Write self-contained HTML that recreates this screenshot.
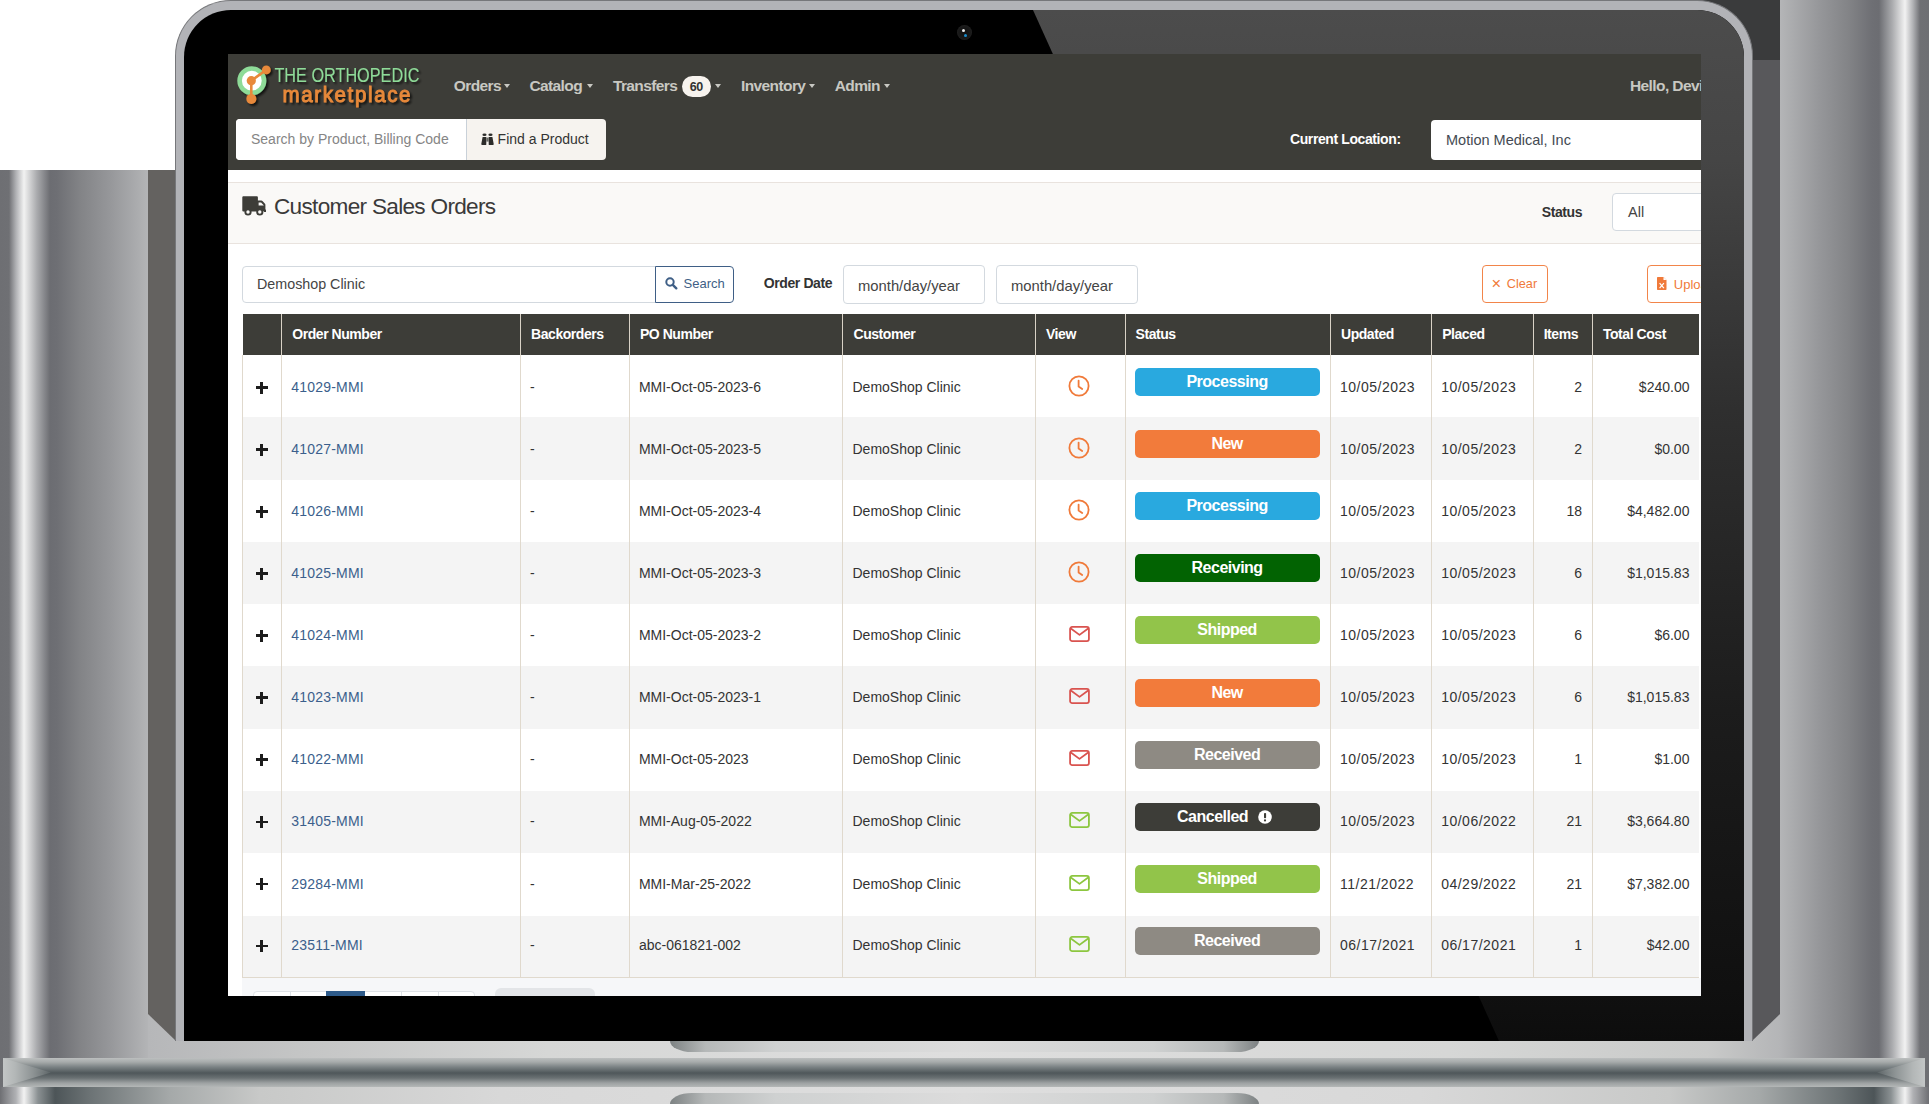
<!DOCTYPE html>
<html><head><meta charset="utf-8">
<style>
*{box-sizing:border-box}
html,body{margin:0;padding:0}
body{width:1929px;height:1104px;position:relative;overflow:hidden;background:#fff;font-family:"Liberation Sans",sans-serif}
.a{position:absolute}
#lstrip{left:0;top:170px;width:149px;height:934px;background:linear-gradient(90deg,#6e6f73 0px,#6f7074 9px,#b0b1b4 16px,#f2f2f2 24px,#a9aaad 37px,#6c6d72 50px,#6e6f74 57px,#838487 81px,#96979a 110px,#b4b5b7 149px)}
#rstrip{left:1780px;top:0;width:149px;height:1104px;background:linear-gradient(270deg,#6e6f73 0px,#6f7074 9px,#b0b1b4 16px,#f2f2f2 24px,#a9aaad 37px,#6c6d72 50px,#6e6f74 57px,#838487 81px,#96979a 110px,#b4b5b7 149px)}
#ltrap{left:148px;top:170px;width:28px;height:871px;background:#646260;clip-path:polygon(0 0,100% 0,100% 100%,0 844px)}
#rtrapTop{left:1690px;top:0;width:90px;height:60px;background:#3a3b3c}
#rtrap{left:1752px;top:60px;width:28px;height:981px;background:#58585b;clip-path:polygon(0 0,100% 0,100% 954px,0 100%)}
#bottom{left:148px;top:1005px;width:1632px;height:99px;background:linear-gradient(90deg,#b6b7b9 0px,#c4c5c5 150px,#d6d7d6 400px,#dedede 800px,#d6d7d6 1300px,#c9cac9 1560px,#b4b5b7 1632px)}
#bot2{left:0;top:1087px;width:1929px;height:17px;background:linear-gradient(90deg,#6e6f73 0px,#b0b1b4 16px,#f2f2f2 24px,#8a9092 38px,#4d5558 55px,#6c7375 90px,#a5a9a9 170px,#c8c9c8 260px,#d8d8d8 500px,#dedede 960px,#d8d8d8 1420px,#c8c9c8 1669px,#a5a9a9 1759px,#6c7375 1839px,#4d5558 1874px,#8a9092 1891px,#f2f2f2 1905px,#b0b1b4 1913px,#6e6f73 1929px)}
#bar{left:3px;top:1058px;width:1922px;height:29px;background:linear-gradient(180deg,#bcbfbf 0px,#a7abab 4px,#7b8284 9px,#4f575a 15px,#6a7173 20px,#9da1a2 25px,#b4b7b7 29px)}
.hinge{left:670px;width:589px;height:11px;background:linear-gradient(90deg,#7d8283 0%,#b5b8b8 6%,#cfd1d1 18%,#dcdcdc 50%,#cfd1d1 82%,#b5b8b8 94%,#7d8283 100%)}
#h1{top:1041px;border-radius:0 0 22px 22px/0 0 11px 11px}
#h2{top:1093px;border-radius:22px 22px 0 0/11px 11px 0 0}
#body{left:175px;top:0;width:1578px;height:1041px;background:#b2b3b7;border-radius:56px 56px 0 0;border:1px solid #76777a;border-bottom:0}
#inner{left:184px;top:10px;width:1560px;height:1031px;background:#000;border-radius:47px 47px 0 0;overflow:hidden}
#glare{left:0;top:0;width:1560px;height:1031px;background:linear-gradient(180deg,#4c4c4c 0px,#454545 150px,#2f2f2f 400px,#1c1c1c 700px,#0f0f0f 1000px,#0d0d0d 1031px);clip-path:polygon(849px 0,1560px 0,1560px 1031px,1315px 1031px)}
#cam{left:957px;top:25px;width:15px;height:15px;border-radius:50%;background:radial-gradient(circle at 50% 50%,#111 0,#1a1a1a 60%,#2a2a2a 85%,#111 100%)}
#screen{left:228px;top:54px;width:1473px;height:942px;background:#fff;overflow:hidden}
</style></head>
<body>
<div class="a" id="lstrip"></div>
<div class="a" id="rstrip"></div>
<div class="a" id="bottom"></div>
<div class="a" id="rtrapTop"></div>
<div class="a" id="ltrap"></div>
<div class="a" id="rtrap"></div>
<div class="a" id="bot2"></div>
<div class="a hinge" id="h1"></div>
<div class="a hinge" id="h2"></div>
<div class="a" id="bar"></div>
<div class="a" style="left:3px;top:1058px;width:48px;height:29px;background:linear-gradient(90deg,#c3c6c6 0px,#b3b7b7 12px,#8d9394 30px,rgba(100,108,110,0.6) 48px);clip-path:polygon(0 0,100% 50%,0 100%)"></div>
<div class="a" style="left:1877px;top:1058px;width:48px;height:29px;background:linear-gradient(270deg,#c3c6c6 0px,#b3b7b7 12px,#8d9394 30px,rgba(100,108,110,0.6) 48px);clip-path:polygon(100% 0,0 50%,100% 100%)"></div>
<div class="a" id="body"></div>
<div class="a" id="inner"><div class="a" id="glare"></div></div>
<div class="a" id="cam"><div class="a" style="left:5px;top:3.5px;width:3px;height:3px;border-radius:50%;background:#eee"></div><div class="a" style="left:6.5px;top:8.5px;width:3px;height:3px;border-radius:50%;background:#1a8ccc"></div></div>
<div class="a" id="screen">
<style>
#screen .t{position:absolute;white-space:nowrap;line-height:1}
#nav{left:0;top:0;width:1473px;height:116px;background:#3d3d38}
.mi{font-size:15.5px;font-weight:bold;color:#c8c8c2;letter-spacing:-0.6px}
.caret{position:absolute;width:0;height:0;border-left:3px solid transparent;border-right:3px solid transparent;border-top:4px solid #c8c8c2}
#tbl{position:absolute;left:14px;top:260px;width:1457px;border-collapse:collapse;table-layout:fixed;font-size:14px;color:#333}
#tbl th{background:#3d3d38;color:#fff;font-weight:bold;text-align:left;height:41px;padding:0 0 2px 10px;letter-spacing:-0.45px;border-left:1px solid #d9d2c6;white-space:nowrap;overflow:hidden}
#tbl td{height:62.3px;padding:1.4px 0 0 9px;border-left:1px solid #e0d9cd;white-space:nowrap;overflow:hidden}
#tbl tr:last-child td{border-bottom:1px solid #e0d9cd}
#tbl td.c0{padding:0;position:relative}
.plus{position:absolute;left:12.5px;top:26.5px;width:12px;height:12px}
.plus:before{content:"";position:absolute;left:0;top:4.8px;width:12px;height:2.5px;background:#1c1c1c}
.plus:after{content:"";position:absolute;left:4.8px;top:0;width:2.5px;height:12px;background:#1c1c1c}
#tbl td.lnk{color:#3b5f8c;letter-spacing:0.2px}
#tbl td.ic{padding:0 2px 0 0;text-align:center;line-height:0}
#tbl td.ic svg{display:inline-block}
#tbl td.st{padding:0 0 0 9px}
.badge{height:28px;width:185px;border-radius:5px;color:#fff;font-weight:bold;font-size:16px;letter-spacing:-0.5px;text-align:center;line-height:28px;margin-top:-8px;position:relative}
.excl{position:absolute;left:123.5px;top:7px;line-height:0}
#tbl td.dt{letter-spacing:0.5px}
#tbl td.rt{text-align:right;padding:1.4px 10px 0 0}
.inp{position:absolute;background:#fff;border:1px solid #d3d9df;border-radius:4px}
</style>
<div class="a" id="nav"></div>
<!-- logo -->
<svg class="a" style="left:4px;top:6px" width="200" height="48" viewBox="0 0 200 48">
<defs><filter id="sh" x="-20%" y="-20%" width="140%" height="160%"><feGaussianBlur in="SourceAlpha" stdDeviation="1.2"/><feOffset dx="1.5" dy="2" result="o"/><feComponentTransfer><feFuncA type="linear" slope="0.7"/></feComponentTransfer><feMerge><feMergeNode/><feMergeNode in="SourceGraphic"/></feMerge></filter></defs>
<g filter="url(#sh)">
<circle cx="19.8" cy="20.7" r="12.2" fill="#fff" stroke="#8edb98" stroke-width="4.6"/>
<path d="M34.3 9.9L19.3 20.7L19.3 38.9" fill="none" stroke="#e8893a" stroke-width="2.6"/>
<circle cx="34.3" cy="9.9" r="4.4" fill="#e8893a"/>
<circle cx="19.3" cy="20.7" r="4.6" fill="#e8893a"/>
<circle cx="19.3" cy="38.9" r="5" fill="#e8893a"/>
<text x="42.4" y="21.6" font-family="Liberation Sans" font-size="20.5" fill="#8edb98" textLength="145" lengthAdjust="spacingAndGlyphs">THE ORTHOPEDIC</text>
<text x="50.5" y="41.8" transform="translate(0,41.8) scale(1,1.12) translate(0,-41.8)" font-family="Liberation Sans" font-size="20.5" fill="#e8893a" stroke="#e8893a" stroke-width="0.8" textLength="128" lengthAdjust="spacing">marketplace</text>
</g>
</svg>
<div class="t mi" style="left:225.8px;top:24px">Orders</div><div class="caret" style="left:276px;top:30px"></div>
<div class="t mi" style="left:301.4px;top:24px">Catalog</div><div class="caret" style="left:359.2px;top:30px"></div>
<div class="t mi" style="left:384.9px;top:24px">Transfers</div>
<div class="a" style="left:454px;top:22px;width:28.7px;height:21px;border-radius:10.5px;background:#f7f3ee;color:#333;font-size:12.5px;line-height:23px;text-align:center;font-weight:bold;letter-spacing:-0.3px">60</div>
<div class="caret" style="left:487px;top:30px"></div>
<div class="t mi" style="left:513px;top:24px">Inventory</div><div class="caret" style="left:580.5px;top:30px"></div>
<div class="t mi" style="left:606.7px;top:24px">Admin</div><div class="caret" style="left:655.6px;top:30px"></div>
<div class="t mi" style="left:1402px;top:24.2px">Hello, Devin</div>
<!-- search group -->
<div class="a" style="left:8px;top:65.3px;width:369.5px;height:40.5px;border-radius:4px;background:#f6f3ef;overflow:hidden">
<div class="a" style="left:0;top:0;width:230.5px;height:40.5px;background:#fff;border-right:1px solid #c9d1d9"></div>
</div>
<div class="t" style="left:23px;top:78.2px;font-size:14px;color:#858585">Search by Product, Billing Code</div>
<svg class="a" style="left:253px;top:79px" width="13" height="12" viewBox="0 0 13 12"><ellipse cx="3.5" cy="1.8" rx="2.1" ry="1.2" fill="#2c2c2a"/><ellipse cx="9.5" cy="1.8" rx="2.1" ry="1.2" fill="#2c2c2a"/><path d="M1.6 4H5.3V11.4C5.3 11.7 5 12 4.6 12H1C0.5 12 0.2 11.6 0.3 11.1Z" fill="#2c2c2a"/><path d="M7.7 4H11.4L12.7 11.1C12.8 11.6 12.5 12 12 12H8.4C8 12 7.7 11.7 7.7 11.4Z" fill="#2c2c2a"/><rect x="5.3" y="4.6" width="2.4" height="4" fill="#6a6a66"/></svg>
<div class="t" style="left:269.6px;top:78.2px;font-size:14px;color:#333">Find a Product</div>
<div class="t" style="left:1062px;top:78.4px;font-size:14px;font-weight:bold;color:#fff;letter-spacing:-0.4px">Current Location:</div>
<div class="a" style="left:1203px;top:66px;width:300px;height:40px;border-radius:4px;background:#fff"></div>
<div class="t" style="left:1218px;top:79px;font-size:14.5px;color:#444a52">Motion Medical, Inc</div>
<!-- header -->
<div class="a" style="left:0;top:128px;width:1473px;height:62px;background:#faf9f7;border-top:1px solid #e9e3de;border-bottom:1px solid #e9e3de"></div>
<svg class="a" style="left:13.7px;top:142px" width="24" height="20" viewBox="0 0 24 20"><path d="M1.6 0.3H14.6C15.4 0.3 15.9 0.8 15.9 1.6V4.6H19.2C19.8 4.6 20.3 4.8 20.7 5.2L23 7.8C23.3 8.1 23.4 8.5 23.4 8.9V15.2H15.9V15.6H1.6C0.8 15.6 0.3 15.1 0.3 14.3V1.6C0.3 0.8 0.8 0.3 1.6 0.3Z" fill="#3d3d38"/><path d="M16.6 6.4H19.1L21.7 9.3V9.6H16.6Z" fill="#faf9f7"/><circle cx="6" cy="16" r="3.6" fill="#3d3d38"/><circle cx="6" cy="16" r="1.7" fill="#faf9f7"/><circle cx="17.8" cy="16" r="3.6" fill="#3d3d38"/><circle cx="17.8" cy="16" r="1.7" fill="#faf9f7"/><rect x="22" y="13.6" width="2" height="2.4" fill="#3d3d38"/></svg>
<div class="t" style="left:46px;top:141.6px;font-size:22.6px;color:#3a3a3a;letter-spacing:-0.7px">Customer Sales Orders</div>
<div class="t" style="left:1313.7px;top:151.2px;font-size:14px;font-weight:bold;color:#333;letter-spacing:-0.4px">Status</div>
<div class="inp" style="left:1384.4px;top:138.8px;width:200px;height:38px"></div>
<div class="t" style="left:1400px;top:150.5px;font-size:14.5px;color:#444">All</div>
<!-- filter row -->
<div class="inp" style="left:14px;top:211.6px;width:414px;height:37.8px;border-radius:4px 0 0 4px"></div>
<div class="t" style="left:29px;top:223px;font-size:14.3px;color:#444">Demoshop Clinic</div>
<div class="a" style="left:427px;top:211.6px;width:79.4px;height:37.8px;border:1.3px solid #3f5f86;border-radius:0 4px 4px 0;background:#fff"></div>
<svg class="a" style="left:437px;top:222.5px" width="13" height="13" viewBox="0 0 13 13"><circle cx="5" cy="5" r="3.7" fill="none" stroke="#3f5f86" stroke-width="2"/><path d="M7.8 7.8L11.3 11.3" stroke="#3f5f86" stroke-width="2.4" stroke-linecap="round"/></svg>
<div class="t" style="left:455.6px;top:222.8px;font-size:13px;color:#3f5f86">Search</div>
<div class="t" style="left:535.8px;top:222px;font-size:14px;font-weight:bold;color:#333;letter-spacing:-0.4px">Order Date</div>
<div class="inp" style="left:614.8px;top:211px;width:142.2px;height:38.6px"></div>
<div class="t" style="left:630px;top:224.8px;font-size:14.8px;color:#444">month/day/year</div>
<div class="inp" style="left:767.6px;top:211px;width:142px;height:38.6px"></div>
<div class="t" style="left:783px;top:224.8px;font-size:14.8px;color:#444">month/day/year</div>
<div class="a" style="left:1254px;top:211.2px;width:65.5px;height:37.8px;border:1.5px solid #f2854a;border-radius:4px"></div>
<div class="t" style="left:1263.5px;top:221px;font-size:16.5px;color:#f07a3a">×</div>
<div class="t" style="left:1278.8px;top:223.8px;font-size:12.7px;color:#f07a3a">Clear</div>
<div class="a" style="left:1419px;top:211.2px;width:120px;height:37.8px;border:1.5px solid #f2854a;border-radius:4px"></div>
<svg class="a" style="left:1429px;top:223px" width="10" height="13" viewBox="0 0 10 13"><path d="M0 1C0 0.4 0.4 0 1 0H6.5L9.5 3V12C9.5 12.6 9.1 13 8.5 13H1C0.4 13 0 12.6 0 12Z" fill="#f07a3a"/><path d="M2.6 6.2L6.9 11.2M6.9 6.2L2.6 11.2" stroke="#fff" stroke-width="1.2"/><path d="M6.5 0V3H9.5" fill="#fff"/></svg>
<div class="t" style="left:1445.8px;top:223.8px;font-size:13px;color:#f07a3a">Upload</div>
<!-- table -->
<table id="tbl">
<colgroup><col style="width:39.3px"><col style="width:238.8px"><col style="width:108.8px"><col style="width:213.6px"><col style="width:192.5px"><col style="width:89.6px"><col style="width:205.4px"><col style="width:101.2px"><col style="width:101.5px"><col style="width:59.3px"><col style="width:107px"></colgroup>
<thead><tr><th style="border-left:0"></th><th>Order Number</th><th>Backorders</th><th>PO Number</th><th>Customer</th><th>View</th><th>Status</th><th>Updated</th><th>Placed</th><th>Items</th><th>Total Cost</th></tr></thead>
<tbody>
<tr style="background:#fff"><td class="c0"><span class="plus" style="top:26.50px"></span></td><td class="lnk" style="padding-top:2.40px">41029-MMI</td><td style="padding-top:2.40px">-</td><td style="padding-top:2.40px">MMI-Oct-05-2023-6</td><td style="padding-top:2.40px">DemoShop Clinic</td><td class="ic"><span style="position:relative;display:inline-block;top:-0.00px"><svg width="22" height="22" viewBox="0 0 22 22"><circle cx="11" cy="11" r="9.6" fill="none" stroke="#f07a3a" stroke-width="1.8"/><path d="M10.6 5.6V11.4L14.2 14" fill="none" stroke="#f07a3a" stroke-width="1.8" stroke-linecap="round" stroke-linejoin="round"/></svg></span></td><td class="st"><div class="badge" style="background:#29a9df;top:-0.00px">Processing</div></td><td class="dt" style="padding-top:2.40px">10/05/2023</td><td class="dt" style="padding-top:2.40px">10/05/2023</td><td class="rt" style="padding-top:2.40px">2</td><td class="rt" style="padding-top:2.40px">$240.00</td></tr>
<tr style="background:#f4f4f4"><td class="c0"><span class="plus" style="top:26.23px"></span></td><td class="lnk" style="padding-top:1.84px">41027-MMI</td><td style="padding-top:1.84px">-</td><td style="padding-top:1.84px">MMI-Oct-05-2023-5</td><td style="padding-top:1.84px">DemoShop Clinic</td><td class="ic"><span style="position:relative;display:inline-block;top:-0.25px"><svg width="22" height="22" viewBox="0 0 22 22"><circle cx="11" cy="11" r="9.6" fill="none" stroke="#f07a3a" stroke-width="1.8"/><path d="M10.6 5.6V11.4L14.2 14" fill="none" stroke="#f07a3a" stroke-width="1.8" stroke-linecap="round" stroke-linejoin="round"/></svg></span></td><td class="st"><div class="badge" style="background:#f27b3b;top:-0.22px">New</div></td><td class="dt" style="padding-top:1.84px">10/05/2023</td><td class="dt" style="padding-top:1.84px">10/05/2023</td><td class="rt" style="padding-top:1.84px">2</td><td class="rt" style="padding-top:1.84px">$0.00</td></tr>
<tr style="background:#fff"><td class="c0"><span class="plus" style="top:25.97px"></span></td><td class="lnk" style="padding-top:1.29px">41026-MMI</td><td style="padding-top:1.29px">-</td><td style="padding-top:1.29px">MMI-Oct-05-2023-4</td><td style="padding-top:1.29px">DemoShop Clinic</td><td class="ic"><span style="position:relative;display:inline-block;top:-0.50px"><svg width="22" height="22" viewBox="0 0 22 22"><circle cx="11" cy="11" r="9.6" fill="none" stroke="#f07a3a" stroke-width="1.8"/><path d="M10.6 5.6V11.4L14.2 14" fill="none" stroke="#f07a3a" stroke-width="1.8" stroke-linecap="round" stroke-linejoin="round"/></svg></span></td><td class="st"><div class="badge" style="background:#29a9df;top:-0.44px">Processing</div></td><td class="dt" style="padding-top:1.29px">10/05/2023</td><td class="dt" style="padding-top:1.29px">10/05/2023</td><td class="rt" style="padding-top:1.29px">18</td><td class="rt" style="padding-top:1.29px">$4,482.00</td></tr>
<tr style="background:#f4f4f4"><td class="c0"><span class="plus" style="top:25.70px"></span></td><td class="lnk" style="padding-top:0.73px">41025-MMI</td><td style="padding-top:0.73px">-</td><td style="padding-top:0.73px">MMI-Oct-05-2023-3</td><td style="padding-top:0.73px">DemoShop Clinic</td><td class="ic"><span style="position:relative;display:inline-block;top:-0.75px"><svg width="22" height="22" viewBox="0 0 22 22"><circle cx="11" cy="11" r="9.6" fill="none" stroke="#f07a3a" stroke-width="1.8"/><path d="M10.6 5.6V11.4L14.2 14" fill="none" stroke="#f07a3a" stroke-width="1.8" stroke-linecap="round" stroke-linejoin="round"/></svg></span></td><td class="st"><div class="badge" style="background:#026302;top:-0.66px">Receiving</div></td><td class="dt" style="padding-top:0.73px">10/05/2023</td><td class="dt" style="padding-top:0.73px">10/05/2023</td><td class="rt" style="padding-top:0.73px">6</td><td class="rt" style="padding-top:0.73px">$1,015.83</td></tr>
<tr style="background:#fff"><td class="c0"><span class="plus" style="top:25.43px"></span></td><td class="lnk" style="padding-top:0.18px">41024-MMI</td><td style="padding-top:0.18px">-</td><td style="padding-top:0.18px">MMI-Oct-05-2023-2</td><td style="padding-top:0.18px">DemoShop Clinic</td><td class="ic"><span style="position:relative;display:inline-block;top:-1.00px"><svg width="21" height="16" viewBox="0 0 22 17"><rect x="1" y="1" width="20" height="15" rx="2.2" fill="none" stroke="#d9534f" stroke-width="1.9"/><path d="M1.8 2.6L11 9.4L20.2 2.6" fill="none" stroke="#d9534f" stroke-width="1.9" stroke-linejoin="round"/></svg></span></td><td class="st"><div class="badge" style="background:#92c44a;top:-0.88px">Shipped</div></td><td class="dt" style="padding-top:0.18px">10/05/2023</td><td class="dt" style="padding-top:0.18px">10/05/2023</td><td class="rt" style="padding-top:0.18px">6</td><td class="rt" style="padding-top:0.18px">$6.00</td></tr>
<tr style="background:#f4f4f4"><td class="c0"><span class="plus" style="top:25.16px"></span></td><td class="lnk" style="padding-top:0;padding-bottom:0.38px">41023-MMI</td><td style="padding-top:0;padding-bottom:0.38px">-</td><td style="padding-top:0;padding-bottom:0.38px">MMI-Oct-05-2023-1</td><td style="padding-top:0;padding-bottom:0.38px">DemoShop Clinic</td><td class="ic"><span style="position:relative;display:inline-block;top:-1.25px"><svg width="21" height="16" viewBox="0 0 22 17"><rect x="1" y="1" width="20" height="15" rx="2.2" fill="none" stroke="#d9534f" stroke-width="1.9"/><path d="M1.8 2.6L11 9.4L20.2 2.6" fill="none" stroke="#d9534f" stroke-width="1.9" stroke-linejoin="round"/></svg></span></td><td class="st"><div class="badge" style="background:#f27b3b;top:-1.10px">New</div></td><td class="dt" style="padding-top:0;padding-bottom:0.38px">10/05/2023</td><td class="dt" style="padding-top:0;padding-bottom:0.38px">10/05/2023</td><td class="rt" style="padding-top:0;padding-bottom:0.38px">6</td><td class="rt" style="padding-top:0;padding-bottom:0.38px">$1,015.83</td></tr>
<tr style="background:#fff"><td class="c0"><span class="plus" style="top:24.90px"></span></td><td class="lnk" style="padding-top:0;padding-bottom:0.94px">41022-MMI</td><td style="padding-top:0;padding-bottom:0.94px">-</td><td style="padding-top:0;padding-bottom:0.94px">MMI-Oct-05-2023</td><td style="padding-top:0;padding-bottom:0.94px">DemoShop Clinic</td><td class="ic"><span style="position:relative;display:inline-block;top:-1.50px"><svg width="21" height="16" viewBox="0 0 22 17"><rect x="1" y="1" width="20" height="15" rx="2.2" fill="none" stroke="#d9534f" stroke-width="1.9"/><path d="M1.8 2.6L11 9.4L20.2 2.6" fill="none" stroke="#d9534f" stroke-width="1.9" stroke-linejoin="round"/></svg></span></td><td class="st"><div class="badge" style="background:#8e8a83;top:-1.32px">Received</div></td><td class="dt" style="padding-top:0;padding-bottom:0.94px">10/05/2023</td><td class="dt" style="padding-top:0;padding-bottom:0.94px">10/05/2023</td><td class="rt" style="padding-top:0;padding-bottom:0.94px">1</td><td class="rt" style="padding-top:0;padding-bottom:0.94px">$1.00</td></tr>
<tr style="background:#f4f4f4"><td class="c0"><span class="plus" style="top:24.63px"></span></td><td class="lnk" style="padding-top:0;padding-bottom:1.49px">31405-MMI</td><td style="padding-top:0;padding-bottom:1.49px">-</td><td style="padding-top:0;padding-bottom:1.49px">MMI-Aug-05-2022</td><td style="padding-top:0;padding-bottom:1.49px">DemoShop Clinic</td><td class="ic"><span style="position:relative;display:inline-block;top:-1.75px"><svg width="21" height="16" viewBox="0 0 22 17"><rect x="1" y="1" width="20" height="15" rx="2.2" fill="none" stroke="#8cc63f" stroke-width="1.9"/><path d="M1.8 2.6L11 9.4L20.2 2.6" fill="none" stroke="#8cc63f" stroke-width="1.9" stroke-linejoin="round"/></svg></span></td><td class="st"><div class="badge" style="background:#3d3d38;top:-1.54px"><span style="margin-left:-29px">Cancelled</span><span class="excl"><svg width="14" height="14" viewBox="0 0 14 14"><circle cx="7" cy="7" r="6.8" fill="#fff"/><rect x="6" y="3" width="2.1" height="5.2" rx="0.8" fill="#3d3d38"/><circle cx="7" cy="10.4" r="1.1" fill="#3d3d38"/></svg></span></div></td><td class="dt" style="padding-top:0;padding-bottom:1.49px">10/05/2023</td><td class="dt" style="padding-top:0;padding-bottom:1.49px">10/06/2022</td><td class="rt" style="padding-top:0;padding-bottom:1.49px">21</td><td class="rt" style="padding-top:0;padding-bottom:1.49px">$3,664.80</td></tr>
<tr style="background:#fff"><td class="c0"><span class="plus" style="top:24.36px"></span></td><td class="lnk" style="padding-top:0;padding-bottom:2.05px">29284-MMI</td><td style="padding-top:0;padding-bottom:2.05px">-</td><td style="padding-top:0;padding-bottom:2.05px">MMI-Mar-25-2022</td><td style="padding-top:0;padding-bottom:2.05px">DemoShop Clinic</td><td class="ic"><span style="position:relative;display:inline-block;top:-2.00px"><svg width="21" height="16" viewBox="0 0 22 17"><rect x="1" y="1" width="20" height="15" rx="2.2" fill="none" stroke="#8cc63f" stroke-width="1.9"/><path d="M1.8 2.6L11 9.4L20.2 2.6" fill="none" stroke="#8cc63f" stroke-width="1.9" stroke-linejoin="round"/></svg></span></td><td class="st"><div class="badge" style="background:#92c44a;top:-1.76px">Shipped</div></td><td class="dt" style="padding-top:0;padding-bottom:2.05px">11/21/2022</td><td class="dt" style="padding-top:0;padding-bottom:2.05px">04/29/2022</td><td class="rt" style="padding-top:0;padding-bottom:2.05px">21</td><td class="rt" style="padding-top:0;padding-bottom:2.05px">$7,382.00</td></tr>
<tr style="background:#f4f4f4"><td class="c0"><span class="plus" style="top:24.10px"></span></td><td class="lnk" style="padding-top:0;padding-bottom:2.60px">23511-MMI</td><td style="padding-top:0;padding-bottom:2.60px">-</td><td style="padding-top:0;padding-bottom:2.60px">abc-061821-002</td><td style="padding-top:0;padding-bottom:2.60px">DemoShop Clinic</td><td class="ic"><span style="position:relative;display:inline-block;top:-2.25px"><svg width="21" height="16" viewBox="0 0 22 17"><rect x="1" y="1" width="20" height="15" rx="2.2" fill="none" stroke="#8cc63f" stroke-width="1.9"/><path d="M1.8 2.6L11 9.4L20.2 2.6" fill="none" stroke="#8cc63f" stroke-width="1.9" stroke-linejoin="round"/></svg></span></td><td class="st"><div class="badge" style="background:#8e8a83;top:-1.98px">Received</div></td><td class="dt" style="padding-top:0;padding-bottom:2.60px">06/17/2021</td><td class="dt" style="padding-top:0;padding-bottom:2.60px">06/17/2021</td><td class="rt" style="padding-top:0;padding-bottom:2.60px">1</td><td class="rt" style="padding-top:0;padding-bottom:2.60px">$42.00</td></tr>
</tbody>
</table>
<div class="a" style="left:14px;top:924px;width:1459px;height:18px;background:#f6f7f9"></div>
<div class="a" style="left:24.6px;top:937.4px;width:222.4px;height:20px;border:1px solid #dee2e6;border-radius:4px;background:#fff"></div>
<div class="a" style="left:62px;top:937.4px;width:1px;height:10px;background:#dee2e6"></div>
<div class="a" style="left:98px;top:937.4px;width:38.7px;height:10px;background:#2d5a8a"></div>
<div class="a" style="left:173px;top:937.4px;width:1px;height:10px;background:#dee2e6"></div>
<div class="a" style="left:210.4px;top:937.4px;width:1px;height:10px;background:#dee2e6"></div>
<div class="a" style="left:267px;top:933.6px;width:100px;height:20px;border-radius:6px;background:#e3e5e8"></div>

<!--ENDSCREEN-->
</div>
</body></html>
